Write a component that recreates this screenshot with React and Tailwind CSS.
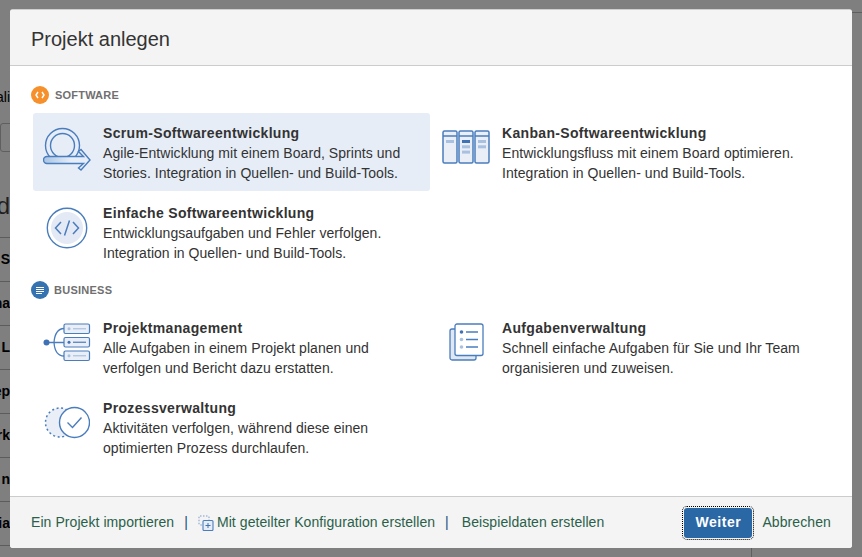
import React from "react";

const FONT = { fontFamily: '"Liberation Sans", Arial, sans-serif' };

function Scrum() {
  return (
    <svg width="48" height="44" viewBox="0 0 48 44" fill="none" stroke="#4a7dbd" strokeWidth="1.4">
      <defs>
        <linearGradient id="sh" x1="0" x2="1" y1="0" y2="0">
          <stop offset="0" stopColor="#a9c4e4" />
          <stop offset="0.6" stopColor="#e6edf7" />
        </linearGradient>
      </defs>
      <circle cx="19.5" cy="18.5" r="17" />
      <circle cx="19.5" cy="18.5" r="12" />
      <path d="M4 29.5 H40.5 L35.5 24.5 L38 22.5 L47 33 L38 43 L35.5 41 L40.5 36.5 H4 a3.5 3.5 0 0 1 0-7z" fill="url(#sh)" />
    </svg>
  );
}

function Kanban() {
  const col = (x, bars) => (
    <g key={x}>
      <rect x={x} y="1" width="14" height="32" rx="1.5" fill="#e9eef7" stroke="#4a7dbd" strokeWidth="1.5" />
      <path d={`M${x} 6 H${x + 14}`} stroke="#4a7dbd" strokeWidth="1.3" />
      {bars.map((b, i) => (
        <rect key={i} x={x + 3} y={10 + i * 5.3} width="8" height="3" fill={b} />
      ))}
    </g>
  );
  return (
    <svg width="48" height="34" viewBox="0 0 48 34">
      {col(1, ["#a9c1e0"])}
      {col(17, ["#3f72b5", "#a9c1e0", "#a9c1e0"])}
      {col(33, ["#a9c1e0", "#a9c1e0"])}
    </svg>
  );
}

function Simple() {
  return (
    <svg width="42" height="42" viewBox="0 0 42 42" fill="none">
      <circle cx="21" cy="21" r="19.7" stroke="#4a7dbd" strokeWidth="1.4" />
      <circle cx="21" cy="21" r="16" fill="#e3e9f5" />
      <path d="M15 15 L9.5 21 L15 27 M27 15 L32.5 21 L27 27 M23.5 13.5 L18.5 28.5" stroke="#4a7dbd" strokeWidth="1.5" />
    </svg>
  );
}

function PM() {
  const row = (y, c) => (
    <g key={y}>
      <rect x="21" y={y} width="25.5" height="9.5" rx="1.5" fill="#e9eef7" stroke="#4a7dbd" strokeWidth="1.2" />
      <circle cx="26" cy={y + 4.75} r="1.5" fill={c} />
      <path d={`M30 ${y + 4.75} H43`} stroke={c === "#3f72b5" ? "#4a7dbd" : "#a9c1e0"} strokeWidth="1.2" />
    </g>
  );
  return (
    <svg width="48" height="39" viewBox="0 0 48 39" fill="none">
      <path d="M5 19.5 H21 M21 5.5 Q12 6 11 19.5 Q12 33 21 33" stroke="#4a7dbd" strokeWidth="1.3" />
      <circle cx="3.5" cy="19.5" r="3" fill="#3f72b5" />
      {row(1, "#a9c1e0")}
      {row(14.5, "#3f72b5")}
      {row(28, "#a9c1e0")}
    </svg>
  );
}

function Tasks() {
  return (
    <svg width="35" height="38" viewBox="0 0 35 38" fill="none">
      <rect x="1" y="6" width="26" height="31" rx="2" fill="#dfe7f3" stroke="#4a7dbd" strokeWidth="1.3" />
      <rect x="6" y="1" width="28" height="31.5" rx="2" fill="#fff" stroke="#4a7dbd" strokeWidth="1.3" />
      <circle cx="12.5" cy="9" r="1.8" fill="#3f72b5" />
      <circle cx="12.5" cy="16.5" r="1.8" fill="#a9c1e0" />
      <circle cx="12.5" cy="24" r="1.8" fill="#a9c1e0" />
      <path d="M17 9 H29 M17 16.5 H29 M17 24 H29" stroke="#4a7dbd" strokeWidth="1.3" />
    </svg>
  );
}

function Process() {
  return (
    <svg width="46" height="33" viewBox="0 0 46 33" fill="none">
      <circle cx="16" cy="16.5" r="14.5" fill="#e9eef7" stroke="#4a7dbd" strokeWidth="1.5" strokeDasharray="2 2.6" />
      <circle cx="30.5" cy="16.5" r="15" fill="#fff" stroke="#4a7dbd" strokeWidth="1.4" />
      <path d="M23.5 16.5 L28.5 21.5 L37.5 11.5" stroke="#4a7dbd" strokeWidth="1.4" />
    </svg>
  );
}

function Card({ icon, title, lines, selected, iconTop }) {
  return (
    <div className={`flex h-[78px] w-[397px] rounded-[3px] ${selected ? "bg-[#e6edf7]" : ""}`}>
      <div className={`w-[68px] mr-[2px] shrink-0 flex justify-center items-start ${iconTop}`}>{icon}</div>
      <div className="pt-[11px] text-[14px] leading-[20px] tracking-[0.05px] text-[#333333]">
        <div className="font-bold tracking-[0.33px] leading-[19px]">{title}</div>
        <div>{lines[0]}</div>
        <div>{lines[1]}</div>
      </div>
    </div>
  );
}

function Backdrop() {
  const rows = ["S", "na", "o L", "ep", "rk", "n", "ia"];
  return (
    <div className="w-[10px] h-full overflow-hidden flex flex-col text-black font-bold text-[14px]">
      <div className="h-[20px] mt-[87px] shrink-0 whitespace-nowrap font-normal flex items-center justify-end leading-[20px]">ali</div>
      <div className="h-[29px] shrink-0 mt-[16px] w-[30px] border border-[#5f5f5f] rounded-[3px]" />
      <div className="h-[85px] shrink-0 pt-[22px] text-[24px] font-normal text-[#1f1f1f] flex items-center justify-end leading-[28px] whitespace-nowrap">d</div>
      <div className="shrink-0 flex flex-col">
        {rows.map((r) => (
          <div key={r} className="h-[44px] border-t border-[#5c5c5c] flex items-center justify-end whitespace-nowrap w-[10px]">{r}</div>
        ))}
        <div className="border-t border-[#5c5c5c]" />
      </div>
    </div>
  );
}

export default function App() {
  return (
    <div className="relative w-[862px] h-[557px] overflow-hidden bg-[#7f7f7f]" style={FONT}>
      <Backdrop />
      <div className="absolute right-0 top-[12px] w-[10px] border-t border-[#5f5f5f]" />
      <div className="absolute left-[751px] top-[548px] h-[9px] border-l border-[#5f5f5f]" />
      <div className="absolute left-[10px] top-[9px] w-[842px] h-[539px] flex flex-col bg-white rounded-[3px] border-t border-[#cfcfcf] overflow-hidden">
        <div className="h-[56px] shrink-0 bg-[#f4f4f4] border-b border-[#cccccc] flex items-center pl-[21px] pt-[3px]">
          <h2 className="text-[20px] text-[#333333] leading-[28px]">Projekt anlegen</h2>
        </div>
        <div className="flex-1 flex flex-col pl-[21px]">
          <div className="flex items-center gap-[6px] mt-[20px] h-[18px]">
            <span className="w-[18px] h-[18px] rounded-full bg-[#f6902c] flex items-center justify-center">
              <svg width="10" height="8" viewBox="0 0 10 8" fill="none" stroke="#fff" strokeWidth="1.5">
                <path d="M3 1 L1 4 L3 7 M7 1 L9 4 L7 7" />
              </svg>
            </span>
            <span className="text-[11px] font-bold text-[#707070] tracking-[0.2px] pt-[1px]">SOFTWARE</span>
          </div>
          <div className="flex ml-[2px] mt-[9px]">
            <Card selected iconTop="pt-[14px]" icon={<Scrum />} title="Scrum-Softwareentwicklung" lines={["Agile-Entwicklung mit einem Board, Sprints und", "Stories. Integration in Quellen- und Build-Tools."]} />
            <div className="w-[2px]" />
            <Card iconTop="pt-[17px]" icon={<Kanban />} title="Kanban-Softwareentwicklung" lines={["Entwicklungsfluss mit einem Board optimieren.", "Integration in Quellen- und Build-Tools."]} />
          </div>
          <div className="ml-[2px] mt-[2px]">
            <Card iconTop="pt-[14px]" icon={<Simple />} title="Einfache Softwareentwicklung" lines={["Entwicklungsaufgaben und Fehler verfolgen.", "Integration in Quellen- und Build-Tools."]} />
          </div>
          <div className="flex items-center gap-[5px] mt-[10px] h-[18px]">
            <span className="w-[18px] h-[18px] rounded-full bg-[#3572b0] flex items-center justify-center">
              <svg width="10" height="9" viewBox="0 0 10 9" fill="none" stroke="#fff" strokeWidth="1">
                <path d="M1 1.5 H9 M1 3.5 H9 M1 5.5 H9 M1 7.5 H7" />
              </svg>
            </span>
            <span className="text-[11px] font-bold text-[#707070] tracking-[0.25px] pt-[1px]">BUSINESS</span>
          </div>
          <div className="flex ml-[2px] mt-[9px]">
            <Card iconTop="pt-[15px]" icon={<PM />} title="Projektmanagement" lines={["Alle Aufgaben in einem Projekt planen und", "verfolgen und Bericht dazu erstatten."]} />
            <div className="w-[2px]" />
            <Card iconTop="pt-[15px]" icon={<Tasks />} title="Aufgabenverwaltung" lines={["Schnell einfache Aufgaben für Sie und Ihr Team", "organisieren und zuweisen."]} />
          </div>
          <div className="ml-[2px] mt-[2px]">
            <Card iconTop="pt-[18px]" icon={<Process />} title="Prozessverwaltung" lines={["Aktivitäten verfolgen, während diese einen", "optimierten Prozess durchlaufen."]} />
          </div>
        </div>
        <div className="h-[52px] shrink-0 bg-[#f4f4f4] border-t border-[#cccccc] flex items-center pl-[21px] pr-[21px] text-[14px] tracking-[0.07px] text-[#2a6049]">
          <span>Ein Projekt importieren</span>
          <span className="ml-[10px] text-[#205081]">|</span>
          <svg className="ml-[10px]" width="16" height="16" viewBox="0 0 16 16" fill="none">
            <rect x="1" y="1" width="10" height="9" rx="1" stroke="#7a9cc9" strokeWidth="1" strokeDasharray="1.5 1.5" />
            <rect x="5" y="5.5" width="10" height="10" rx="1" fill="#e6edf7" stroke="#4a7dbd" strokeWidth="1.1" />
            <path d="M10 8 V13 M7.5 10.5 H12.5" stroke="#3f72b5" strokeWidth="1" />
          </svg>
          <span className="ml-[3px]">Mit geteilter Konfiguration erstellen</span>
          <span className="ml-[10px] text-[#205081]">|</span>
          <span className="ml-[13px]">Beispieldaten erstellen</span>
          <div className="ml-auto flex items-center">
            <button className="h-[30px] w-[68px] rounded-[3px] bg-[#2a67a5] text-white font-bold text-[14px] tracking-[0.5px] outline-1 outline-dotted outline-black outline-offset-[1px]">Weiter</button>
            <span className="ml-[10px] tracking-[0.1px]">Abbrechen</span>
          </div>
        </div>
      </div>
    </div>
  );
}
